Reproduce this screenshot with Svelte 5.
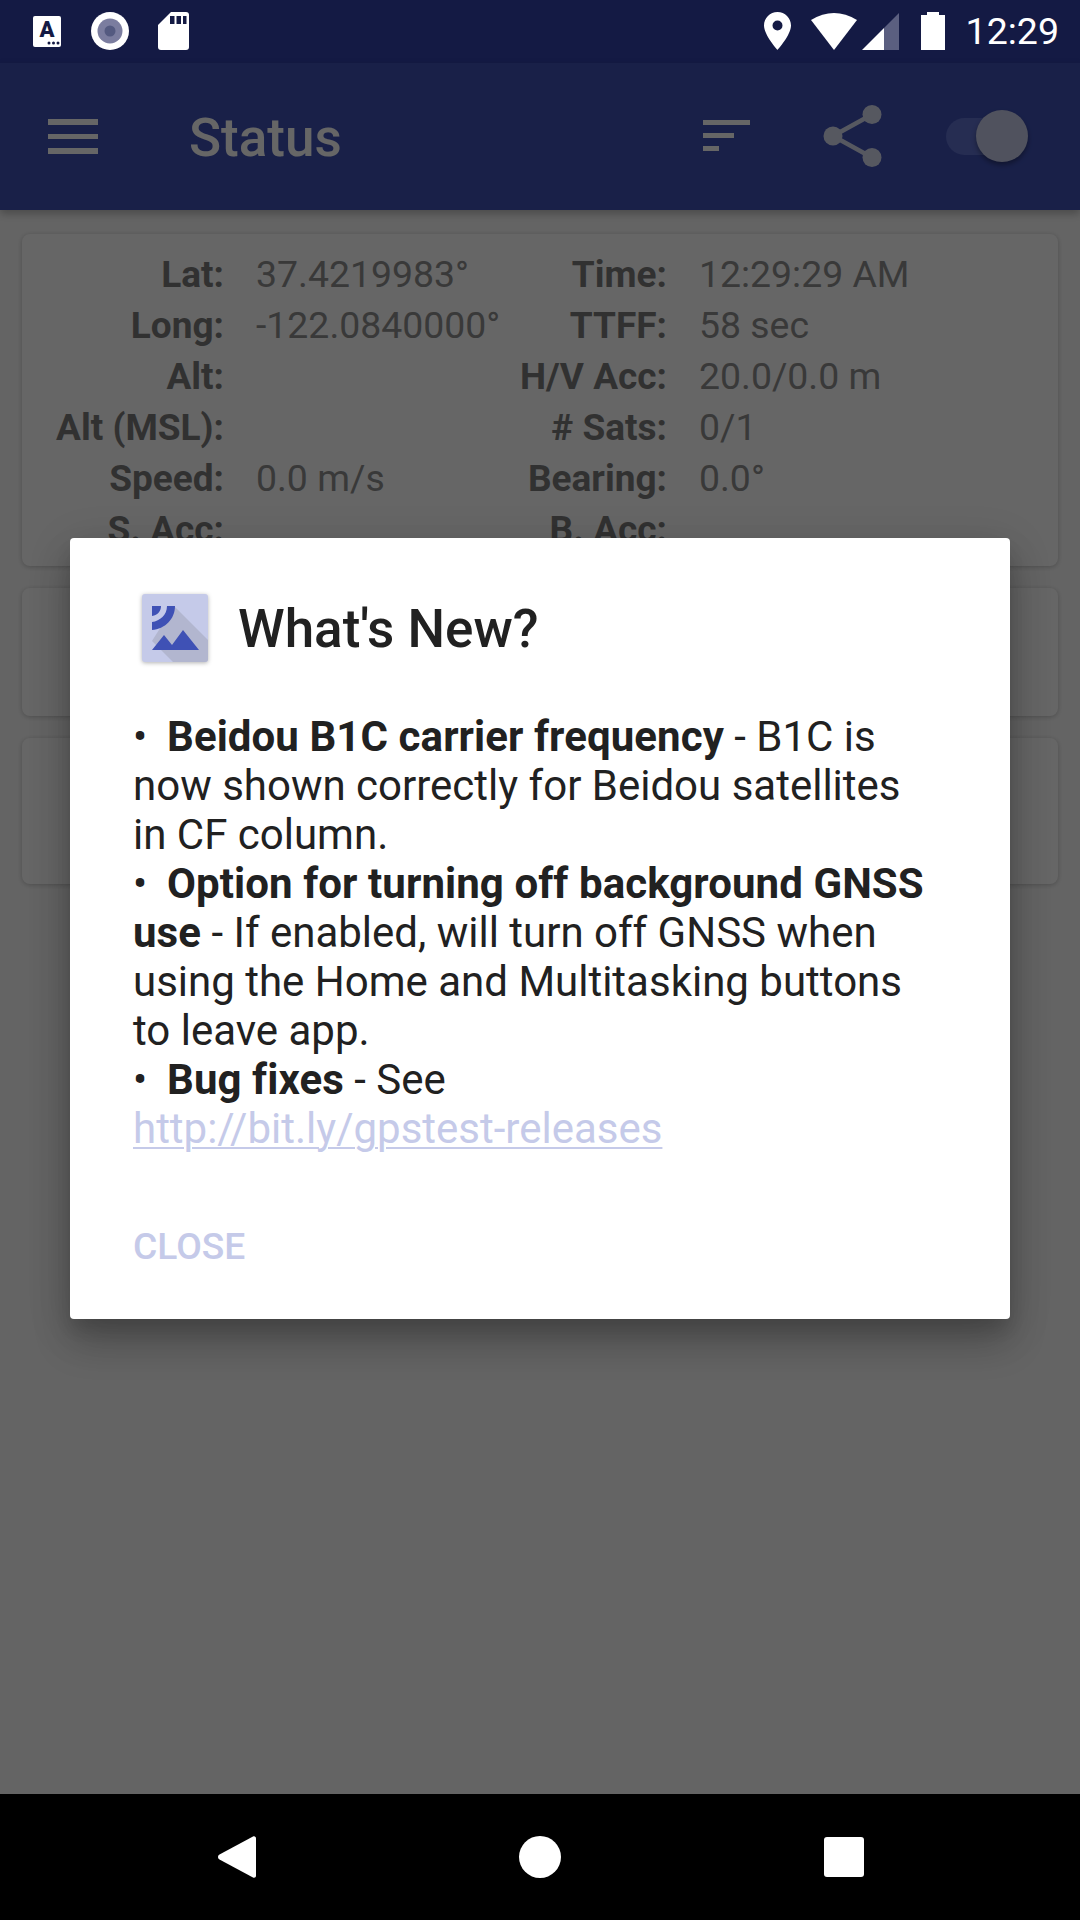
<script>
  const left = [
    ['Lat:', '37.4219983°', 'Time:', '12:29:29 AM'],
    ['Long:', '-122.0840000°', 'TTFF:', '58 sec'],
    ['Alt:', '', 'H/V Acc:', '20.0/0.0 m'],
    ['Alt (MSL):', '', '# Sats:', '0/1'],
    ['Speed:', '0.0 m/s', 'Bearing:', '0.0°'],
    ['S. Acc:', '', 'B. Acc:', '']
  ];
</script>

<div class="screen">
  <header class="status">
    <svg class="i-a" viewBox="0 0 28 31" width="28" height="31">
      <rect width="28" height="31" rx="2" fill="#fff" />
      <text x="14" y="21" text-anchor="middle" class="a-glyph">A</text>
      <circle cx="16" cy="27" r="1.5" fill="#141a44" /><circle cx="20.5" cy="27" r="1.5" fill="#141a44" /><circle cx="25" cy="27" r="1.5" fill="#141a44" />
    </svg>
    <svg class="i-rec" viewBox="0 0 38 38" width="38" height="38">
      <circle cx="19" cy="19" r="19" fill="#fff" /><circle cx="19" cy="19" r="12.5" fill="#7b7d9f" /><circle cx="19" cy="19" r="5.5" fill="#545a80" />
    </svg>
    <svg class="i-sd" viewBox="0 0 31 38" width="31" height="38">
      <path d="M13 0H28a3 3 0 0 1 3 3V35a3 3 0 0 1-3 3H3a3 3 0 0 1-3-3V13Z" fill="#fff" />
      <rect x="12" y="4" width="4.5" height="8" fill="#141a44" /><rect x="18.5" y="4" width="4.5" height="8" fill="#141a44" /><rect x="25" y="4" width="3.5" height="8" fill="#141a44" />
    </svg>
    <span class="spacer"></span>
    <svg class="i-pin" viewBox="0 0 27 38" width="27" height="38">
      <path fill-rule="evenodd" d="M13.5 0C6 0 0 6 0 13.5 0 23 13.5 38 13.5 38S27 23 27 13.5C27 6 21 0 13.5 0ZM13.5 8.5a5 5 0 1 1 0 10 5 5 0 0 1 0-10Z" fill="#fff" />
    </svg>
    <svg class="i-wifi" viewBox="0 0 46 37" width="46" height="37">
      <path d="M0 7Q23 -7 46 7L23 37Z" fill="#fff" />
    </svg>
    <svg class="i-sig" viewBox="0 0 37 37" width="37" height="37">
      <path d="M37 0V37H22V15Z" fill="#5b5f80" /><path d="M22 15V37H0Z" fill="#fff" />
    </svg>
    <svg class="i-bat" viewBox="0 0 24 38" width="24" height="38">
      <path d="M6 0H18V3H24V38H0V3H6Z" fill="#fff" />
    </svg>
    <span class="clock">12:29</span>
  </header>

  <main class="main">
    <div class="toolbar">
      <span class="burger"><i></i><i></i><i></i></span>
      <h1>Status</h1>
      <span class="spacer"></span>
      <span class="sort"><i class="s1"></i><i class="s2"></i><i class="s3"></i></span>
      <svg class="share" viewBox="0 0 59 62" width="59" height="62">
        <path d="M49 9.5 10 31 49 52.5" fill="none" stroke="#fff" stroke-width="4.5" />
        <circle cx="49" cy="9.5" r="9.5" fill="#fff" /><circle cx="10" cy="31" r="9.5" fill="#fff" /><circle cx="49" cy="52.5" r="9.5" fill="#fff" />
      </svg>
      <span class="switch"><span class="thumb"></span></span>
    </div>

    <div class="content">
      <section class="card first">
        {#each left as r}
          <div class="row">
            <b class="l1">{r[0]}</b><span class="v1">{r[1]}</span>
            <b class="l2">{r[2]}</b><span class="v2">{r[3]}</span>
          </div>
        {/each}
      </section>
      <section class="card second"></section>
      <section class="card third"></section>
    </div>

    <div class="scrim"></div>

    <div class="dialog">
      <div class="head">
        <svg class="logo" viewBox="0 0 66 68" width="66" height="68">
          <rect width="66" height="68" rx="3" fill="#c5cae9" />
          <path d="M32 12 66 46V65a3 3 0 0 1-3 3H31L10 47Z" fill="#b2b6cf" />
          <path d="M10 12H19C19 17 16 21 10 22Z" fill="#3f51b5" />
          <path d="M25 12H33C33 25 23 35 10 36V28C18 27 25 21 25 12Z" fill="#3f51b5" />
          <path d="M10 56 22 41 30 51 41 36 57 56Z" fill="#3f51b5" />
        </svg>
        <h2>What's New?</h2>
      </div>
      <div class="body">
        <div><span class="bul">•</span><b>Beidou B1C carrier frequency</b> - B1C is</div>
        <div>now shown correctly for Beidou satellites</div>
        <div>in CF column.</div>
        <div><span class="bul">•</span><b>Option for turning off background GNSS</b></div>
        <div><b>use</b> - If enabled, will turn off GNSS when</div>
        <div>using the Home and Multitasking buttons</div>
        <div>to leave app.</div>
        <div><span class="bul">•</span><b>Bug fixes</b> - See</div>
        <div><a href="#top">http://bit.ly/gpstest-releases</a></div>
      </div>
      <div class="actions">CLOSE</div>
    </div>
  </main>

  <footer class="nav">
    <svg viewBox="0 0 38 42" width="38" height="42"><path d="M35 0.5C36.5 -0.3 38 0.7 38 2.5V39.5C38 41.3 36.5 42.3 35 41.5L1.5 23.5C-0.5 22.3-0.5 19.7 1.5 18.5Z" fill="#fff" /></svg>
    <span class="dot"></span>
    <span class="sq"></span>
  </footer>
</div>

<style>
  :global(body) { margin: 0; background: #000; }
  .screen {
    width: 1080px; height: 1920px; display: flex; flex-direction: column;
    font-family: Roboto, "Liberation Sans", sans-serif; overflow: hidden;
  }
  .status {
    height: 63px; flex: none; background: #141a44; display: flex; align-items: flex-start;
    padding: 0 21px 0 33px; box-sizing: border-box; position: relative;
  }
  .status svg { display: block; flex: none; }
  .i-a { margin-top: 16px; }
  .i-rec { margin: 12px 0 0 30px; }
  .i-sd { margin: 12px 0 0 29px; }
  .a-glyph { font: 900 22px Roboto, sans-serif; fill: #141a44; }
  .spacer { flex: 1; }
  .i-pin { margin-top: 12px; }
  .i-wifi { margin: 13px 0 0 20px; }
  .i-sig { margin: 13px 0 0 5px; }
  .i-bat { margin: 12px 0 0 22px; }
  .clock { margin-left: 21px; color: #fff; font-size: 37.5px; line-height: 63px; }

  .main { flex: 1; position: relative; background: #fafafa; display: flex; flex-direction: column; min-height: 0; }
  .toolbar {
    height: 147px; flex: none; background: #3f51b5; color: #fff; display: flex; align-items: center;
    padding: 0 66px 0 48px; box-sizing: border-box;
    box-shadow: 0 4px 8px rgba(0,0,0,.25);
    position: relative; z-index: 1;
  }
  .burger { width: 50px; display: flex; flex-direction: column; gap: 9px; }
  .burger i { display: block; height: 5.5px; background: #fff; }
  h1 { margin: 2px 0 0 91px; font-size: 53px; font-weight: 500; line-height: 60px; }
  .sort { width: 47px; display: flex; flex-direction: column; gap: 8px; margin-top: -3px; }
  .sort i { display: block; height: 5px; background: #fff; }
  .s2 { width: 31px; }
  .s3 { width: 16px; }
  .share { margin-left: 73px; display: block; opacity: .8; margin-top: -2px; }
  .switch { margin-left: 64px; width: 68px; height: 37px; border-radius: 19px; background: #5f70cd; position: relative; }
  .thumb {
    position: absolute; left: 30px; top: -8px; width: 52px; height: 52px; border-radius: 50%;
    background: #c8cdea; box-shadow: 0 3px 5px rgba(0,0,0,.35);
  }

  .content { flex: 1; padding: 24px 22px 0; display: flex; flex-direction: column; gap: 22px; }
  .card { background: #fff; border-radius: 8px; box-shadow: 0 1px 5px rgba(0,0,0,.22); box-sizing: border-box; flex: none; }
  .first { height: 332px; padding-top: 15px; overflow: hidden; }
  .second { height: 128px; }
  .third { height: 146px; }
  .row { display: grid; grid-template-columns: 202px 242px 201px 1fr; height: 51px; line-height: 51px; font-size: 37px; }
  .row b { text-align: right; font-weight: 700; color: #7c7c7c; white-space: nowrap; }
  .row span { color: #8f8f8f; white-space: nowrap; font-size: 37.4px; }
  .v1 { padding-left: 32px; }
  .v2 { padding-left: 32px; }

  .scrim { position: absolute; inset: 0; background: rgba(0,0,0,.6); z-index: 2; }

  .dialog {
    position: absolute; z-index: 3; left: 70px; top: 475px; width: 940px; height: 781px;
    background: #fff; border-radius: 4px; box-sizing: border-box;
    box-shadow: 0 24px 38px rgba(0,0,0,.2), 0 9px 46px rgba(0,0,0,.14), 0 11px 15px rgba(0,0,0,.08);
    display: flex; flex-direction: column; padding-left: 63px;
  }
  .head { display: flex; align-items: center; padding: 54px 0 0 9px; height: 72px; }
  .logo { display: block; flex: none; filter: drop-shadow(0 1px 2px rgba(0,0,0,.3)); }
  h2 { margin: 2px 0 0 30px; font-size: 53px; font-weight: 500; color: #212121; line-height: 70px; }
  .body { margin-top: 48px; font-size: 42px; line-height: 49px; color: #212121; white-space: nowrap; }
  .bul { display: inline-block; width: 34px; }
  .body b { font-weight: 700; letter-spacing: .08px; }
  .body a { color: #c5cae9; text-decoration: underline; text-underline-offset: 4px; text-decoration-thickness: 2px; }
  .actions { margin-top: 69px; font-size: 37.2px; font-weight: 500; color: #c5cae9; line-height: 48px; }

  .nav { height: 126px; flex: none; background: #000; display: flex; align-items: center; position: relative; padding-left: 218px; box-sizing: border-box; }
  .nav svg { display: block; flex: none; }
  .dot { margin-left: 263px; width: 42px; height: 42px; border-radius: 50%; background: #fff; }
  .sq { margin-left: 263px; width: 40px; height: 40px; border-radius: 3px; background: #fff; }
</style>
